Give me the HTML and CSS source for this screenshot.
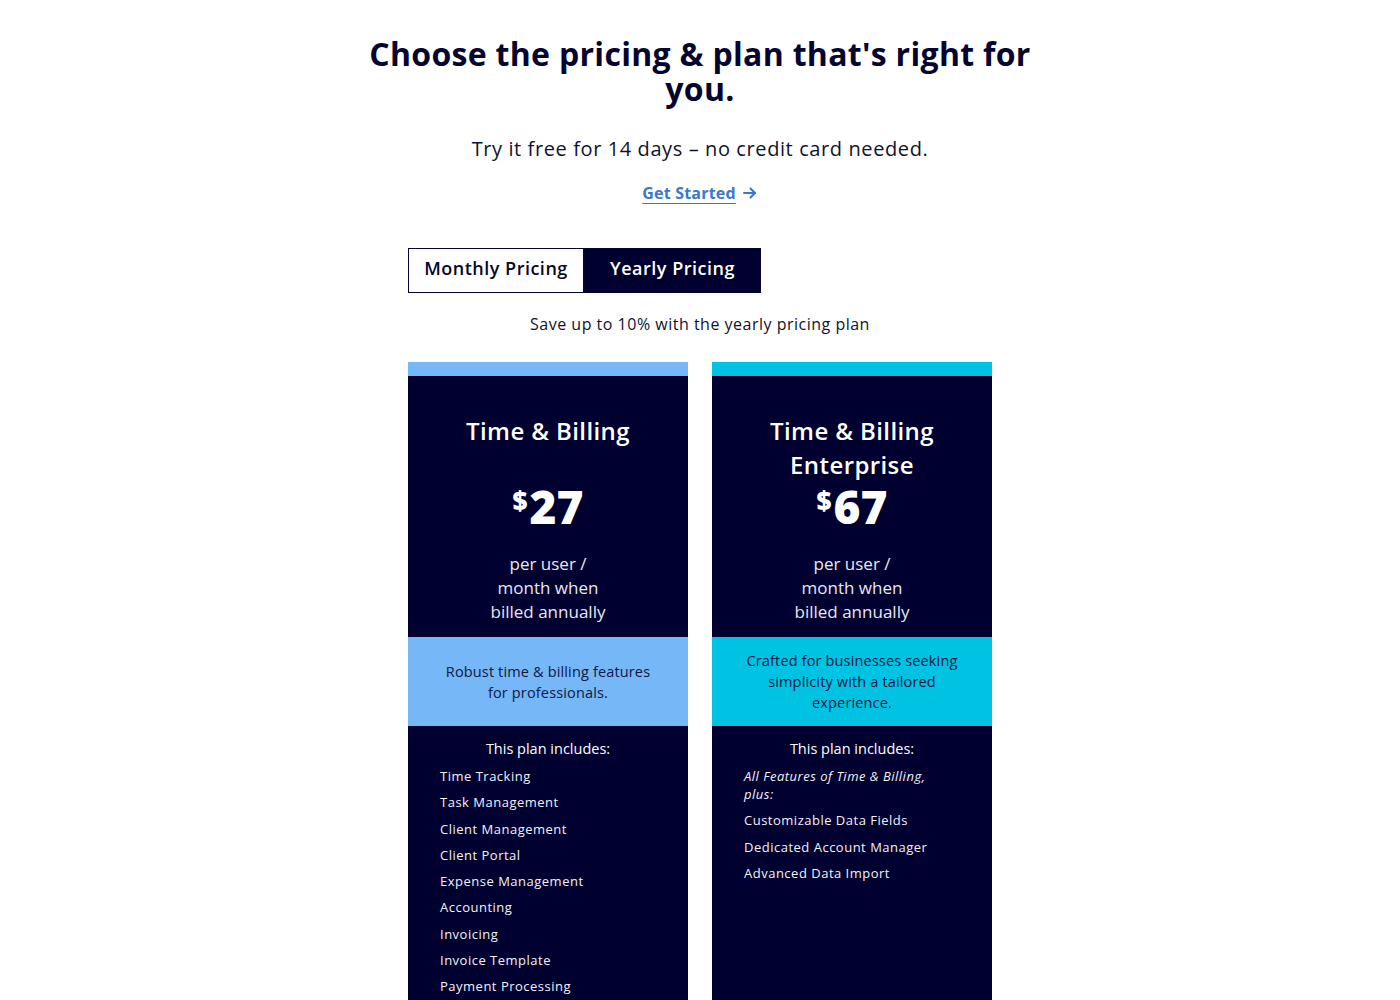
FILE: index.html
```html
<!DOCTYPE html>
<html lang="en">
<head>
    <meta charset="UTF-8">
    <title>Pricing</title>
    <link rel="stylesheet" href="styles.css">
</head>
<body>
    <div class="pricing">
        <h1 class="pricing-title">Choose the pricing &amp; plan that's right for you.</h1>
        <p class="pricing-sub">Try it free for 14 days – no credit card needed.</p>
        <a class="get-started" href="#">
            <span class="get-started-text">Get Started</span>
            <svg width="16" height="16" viewBox="0 0 16 16" fill="none" stroke="#3a78d0" stroke-width="2" stroke-linecap="round" stroke-linejoin="round">
                <path d="M2 8h11"/>
                <path d="M8.5 3.5 13 8l-4.5 4.5"/>
            </svg>
        </a>

        <div class="plans">
            <div class="toggle">
                <button class="toggle-btn">Monthly Pricing</button>
                <button class="toggle-btn active">Yearly Pricing</button>
            </div>
            <p class="save-note">Save up to 10% with the yearly pricing plan</p>

            <div class="cards">
                <!-- plan 1 -->
                <div class="card card-blue">
                    <div class="card-strip"></div>
                    <div class="card-head">
                        <h2 class="card-name">Time &amp; Billing</h2>
                        <div class="card-price"><sup>$</sup>27</div>
                        <p class="card-per">per user / month when billed annually</p>
                    </div>
                    <div class="card-desc">Robust time &amp; billing features for professionals.</div>
                    <div class="card-body">
                        <p class="includes">This plan includes:</p>
                        <ul class="features">
                            <li>Time Tracking</li>
                            <li>Task Management</li>
                            <li>Client Management</li>
                            <li>Client Portal</li>
                            <li>Expense Management</li>
                            <li>Accounting</li>
                            <li>Invoicing</li>
                            <li>Invoice Template</li>
                            <li>Payment Processing</li>
                        </ul>
                    </div>
                </div>

                <!-- plan 2 -->
                <div class="card card-cyan">
                    <div class="card-strip"></div>
                    <div class="card-head">
                        <h2 class="card-name">Time &amp; Billing Enterprise</h2>
                        <div class="card-price"><sup>$</sup>67</div>
                        <p class="card-per">per user / month when billed annually</p>
                    </div>
                    <div class="card-desc">Crafted for businesses seeking simplicity with a tailored experience.</div>
                    <div class="card-body">
                        <p class="includes">This plan includes:</p>
                        <ul class="features">
                            <li><em>All Features of Time &amp; Billing, plus:</em></li>
                            <li>Customizable Data Fields</li>
                            <li>Dedicated Account Manager</li>
                            <li>Advanced Data Import</li>
                        </ul>
                    </div>
                </div>
            </div>
        </div>
    </div>
</body>
</html>
```

FILE: styles.css
```css
body {
    margin: 0;
    font-family: "Open Sans", Lato, sans-serif;
    color: #05052f;
    background: #fff;
}

.pricing {
    display: flex;
    flex-direction: column;
    align-items: center;
    padding-top: 36px;
}

.pricing-title {
    max-width: 700px;
    margin: 0;
    font-size: 32px;
    line-height: 35px;
    font-weight: 700;
    letter-spacing: 0.3px;
    text-align: center;
    color: #05052f;
}

.pricing-sub {
    margin: 30px 0 0;
    font-size: 20px;
    line-height: 26px;
    letter-spacing: 0.6px;
    color: #11112e;
}

.get-started {
    display: flex;
    align-items: center;
    gap: 6px;
    margin-top: 20px;
    text-decoration: none;
}

.get-started-text {
    font-size: 16px;
    font-weight: 700;
    letter-spacing: 0.2px;
    color: #3a78d0;
    text-decoration: underline;
    text-underline-offset: 4px;
    text-decoration-thickness: 1px;
}

.plans {
    width: 584px;
    margin-top: 44px;
}

.toggle {
    display: flex;
}

.toggle-btn {
    width: 176px;
    height: 45px;
    padding: 0 0 5px;
    border: 1px solid #05052f;
    background: #fff;
    color: #05052f;
    font-family: inherit;
    font-size: 18px;
    font-weight: 600;
    letter-spacing: 0.5px;
    cursor: pointer;
}

.toggle-btn.active {
    background: #000030;
    color: #fff;
    width: 177px;
}

.save-note {
    margin: 21px 0 0;
    font-size: 16px;
    line-height: 20px;
    letter-spacing: 0.5px;
    text-align: center;
    color: #11112e;
}

.cards {
    display: flex;
    gap: 24px;
    margin-top: 28px;
}

.card {
    width: 280px;
    background: #000030;
    min-height: 640px;
}

.card-strip {
    height: 14px;
}

.card-blue .card-strip,
.card-blue .card-desc {
    background: #75b7f7;
}

.card-cyan .card-strip,
.card-cyan .card-desc {
    background: #00c2e2;
}

.card-head {
    padding: 38px 20px 13px;
    text-align: center;
    color: #fff;
}

.card-name {
    min-height: 68px;
    margin: 0;
    font-size: 24px;
    line-height: 34px;
    font-weight: 600;
    letter-spacing: 0.4px;
}

.card-price {
    font-size: 46px;
    line-height: 48px;
    font-weight: 800;
}

.card-price sup {
    font-size: 26px;
    vertical-align: 14px;
    line-height: 0;
    margin-right: 2px;
}

.card-per {
    max-width: 132px;
    margin: 22px auto 0;
    font-size: 17px;
    line-height: 24px;
    color: #e8e8f0;
}

.card-desc {
    min-height: 89px;
    box-sizing: border-box;
    padding: 11px 34px;
    font-size: 14.5px;
    line-height: 21px;
    letter-spacing: 0.15px;
    text-align: center;
    color: #0d1845;
    display: flex;
    align-items: center;
    justify-content: center;
}

.card-body {
    padding: 14px 38px 20px 32px;
    color: #fff;
}

.includes {
    margin: 0 -6px 0 0;
    font-size: 14.5px;
    line-height: 18px;
    text-align: center;
}

.features {
    list-style: none;
    margin: 9px 0 0;
    padding: 0;
}

.features li {
    font-size: 13px;
    line-height: 18px;
    letter-spacing: 0.5px;
    margin-bottom: 8.3px;
    color: #f2f2f7;
}
```
